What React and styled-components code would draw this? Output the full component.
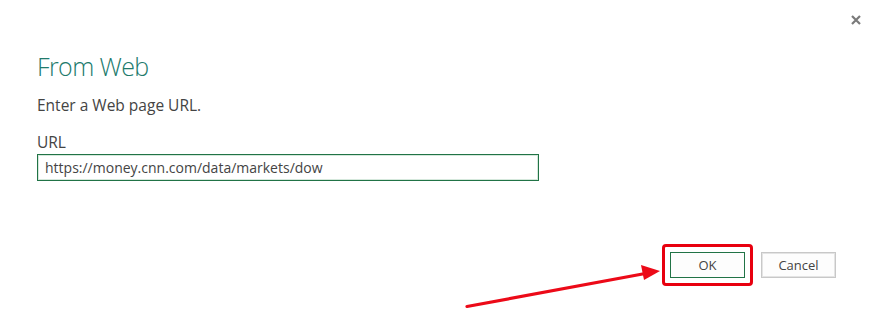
import React from "react";
import styled, { createGlobalStyle } from "styled-components";

const GlobalStyle = createGlobalStyle`
  html, body {
    margin: 0;
    padding: 0;
    background: #fff;
  }
  body {
    font-family: "Open Sans", "Noto Sans", Arial, sans-serif;
    color: #444;
  }
`;

const Dialog = styled.div`
  position: relative;
  width: 875px;
  height: 313px;
  box-sizing: border-box;
  padding: 49px 39px 0 37px;
  display: flex;
  flex-direction: column;
  background: #fff;
  overflow: hidden;
`;

const CloseButton = styled.button`
  position: absolute;
  top: 13px;
  right: 12px;
  width: 14px;
  height: 14px;
  padding: 0;
  border: none;
  background: transparent;
  cursor: pointer;
  display: flex;
  align-items: center;
  justify-content: center;
`;

const Title = styled.h1`
  margin: 0;
  font-family: "Open Sans", "Noto Sans", sans-serif;
  font-weight: 300;
  font-size: 25px;
  letter-spacing: -0.6px;
  line-height: 34px;
  color: #217a6c;
`;

const Prompt = styled.p`
  margin: 12px 0 0;
  font-size: 15.5px;
  line-height: 20px;
  color: #444;
`;

const Label = styled.label`
  display: block;
  margin-top: 17px;
  font-size: 15.5px;
  line-height: 20px;
  color: #444;
`;

const UrlInput = styled.input`
  display: block;
  box-sizing: border-box;
  width: 502px;
  height: 27px;
  margin-top: 2px;
  padding: 0 7px;
  border: 1px solid #217346;
  box-shadow: inset 0 0 0 1px #d5e8dc;
  font-family: "Open Sans", "Noto Sans", sans-serif;
  font-size: 14px;
  color: #444;
  outline: none;
`;

const Footer = styled.div`
  margin-top: auto;
  margin-bottom: 27px;
  display: flex;
  justify-content: flex-end;
  align-items: center;
  gap: 8px;
`;

const Highlight = styled.div`
  padding: 5px;
  border: 3px solid #e8000f;
  border-radius: 4px;
  display: flex;
`;

const Button = styled.button`
  box-sizing: border-box;
  width: 75px;
  height: 26px;
  padding: 0;
  background: #fdfdfd;
  border: ${(p) => (p.primary ? "1px solid #217346" : "1px solid #c8c8c8")};
  box-shadow: ${(p) => (p.primary ? "none" : "inset 0 0 0 1px #e4e4e4")};
  font-family: "Open Sans", "Noto Sans", sans-serif;
  font-size: 13px;
  color: #444;
  cursor: pointer;
`;

const Arrow = styled.svg`
  position: absolute;
  left: 0;
  top: 0;
  pointer-events: none;
`;

export default function App() {
  return (
    <>
      <GlobalStyle />
      <Dialog>
        <CloseButton aria-label="Close">
          <svg width="10" height="10" viewBox="0 0 10 10">
            <path d="M1 1 L9 9 M9 1 L1 9" stroke="#7a7a7a" strokeWidth="2.2" />
          </svg>
        </CloseButton>
        <Title>From Web</Title>
        <Prompt>Enter a Web page URL.</Prompt>
        <Label htmlFor="url">URL</Label>
        <UrlInput id="url" defaultValue="https://money.cnn.com/data/markets/dow" />
        <Footer>
          <Highlight>
            <Button primary>OK</Button>
          </Highlight>
          <Button>Cancel</Button>
        </Footer>
        <Arrow width="875" height="313">
          <line x1="467" y1="306.5" x2="648" y2="273" stroke="#ec0a18" strokeWidth="3.2" strokeLinecap="round" />
          <polygon points="660,271 641,265 644,280" fill="#ec0a18" />
        </Arrow>
      </Dialog>
    </>
  );
}
